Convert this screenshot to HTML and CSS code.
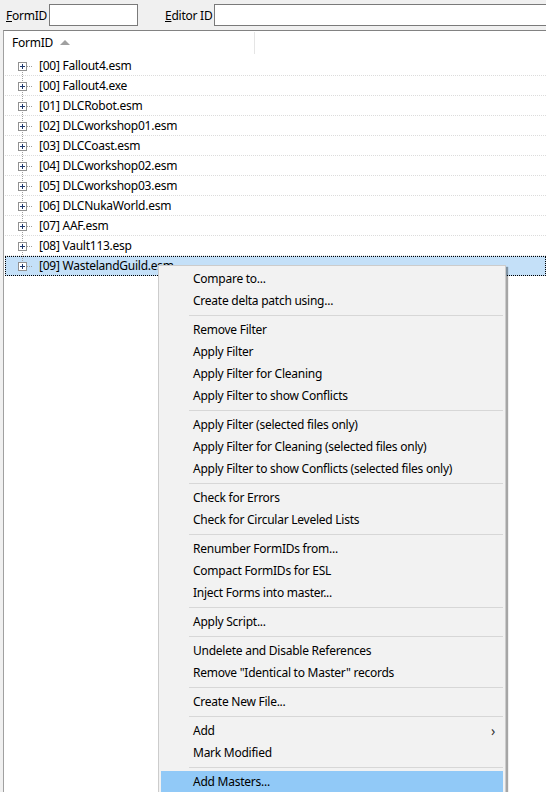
FILE: index.html
```html
<!DOCTYPE html>
<html>

<head>
    <meta charset="utf-8" />
    <title>xEdit - Files</title>
    <link rel="stylesheet" href="styles.css">
</head>

<body>
    <div class="filterbar">
        <label class="filter-label"><u>F</u>ormID</label>
        <input class="filter-input formid-input" type="text" />
        <label class="filter-label editor-label"><u>E</u>ditor ID</label>
        <input class="filter-input editor-input" type="text" />
    </div>

    <div class="tree">
        <div class="tree-header">
            <div class="col-formid">FormID <span class="sort-arrow"></span></div>
            <div class="col-rest"></div>
        </div>
        <div class="tree-body">
            <div class="row first"><span class="node"><span class="expander"></span></span>[00] Fallout4.esm</div>
            <div class="row"><span class="node"><span class="expander"></span></span>[00] Fallout4.exe</div>
            <div class="row"><span class="node"><span class="expander"></span></span>[01] DLCRobot.esm</div>
            <div class="row"><span class="node"><span class="expander"></span></span>[02] DLCworkshop01.esm</div>
            <div class="row"><span class="node"><span class="expander"></span></span>[03] DLCCoast.esm</div>
            <div class="row"><span class="node"><span class="expander"></span></span>[04] DLCworkshop02.esm</div>
            <div class="row"><span class="node"><span class="expander"></span></span>[05] DLCworkshop03.esm</div>
            <div class="row"><span class="node"><span class="expander"></span></span>[06] DLCNukaWorld.esm</div>
            <div class="row"><span class="node"><span class="expander"></span></span>[07] AAF.esm</div>
            <div class="row"><span class="node"><span class="expander"></span></span>[08] Vault113.esp</div>
            <div class="row selected last"><span class="node"><span class="expander"></span></span>[09] WastelandGuild.esm</div>
        </div>

        <div class="popup">
            <div class="item">Compare to...</div>
            <div class="item">Create delta patch using...</div>
            <div class="sep"></div>
            <div class="item">Remove Filter</div>
            <div class="item">Apply Filter</div>
            <div class="item">Apply Filter for Cleaning</div>
            <div class="item">Apply Filter to show Conflicts</div>
            <div class="sep"></div>
            <div class="item">Apply Filter (selected files only)</div>
            <div class="item">Apply Filter for Cleaning (selected files only)</div>
            <div class="item">Apply Filter to show Conflicts (selected files only)</div>
            <div class="sep"></div>
            <div class="item">Check for Errors</div>
            <div class="item">Check for Circular Leveled Lists</div>
            <div class="sep"></div>
            <div class="item">Renumber FormIDs from...</div>
            <div class="item">Compact FormIDs for ESL</div>
            <div class="item">Inject Forms into master...</div>
            <div class="sep"></div>
            <div class="item">Apply Script...</div>
            <div class="sep"></div>
            <div class="item">Undelete and Disable References</div>
            <div class="item">Remove "Identical to Master" records</div>
            <div class="sep"></div>
            <div class="item">Create New File...</div>
            <div class="sep"></div>
            <div class="item submenu">Add<span class="chevron">&#8250;</span></div>
            <div class="item">Mark Modified</div>
            <div class="sep"></div>
            <div class="item hot">Add Masters...</div>
        </div>
    </div>
</body>

</html>
```

FILE: styles.css
```css
body,
html {
    width: 100%;
    height: 100%;
    overflow: hidden;
}

body {
    margin: 0;
    background: #f0f0f0;
    font-family: "Noto Sans", "Open Sans", sans-serif;
    font-size: 12px;
    letter-spacing: -0.25px;
    color: #000;
    display: flex;
    flex-direction: column;
}

/* filter fields on top */
.filterbar {
    height: 30px;
    display: flex;
    align-items: center;
    padding-left: 6px;
    flex-shrink: 0;
}

.filter-label {
    margin-right: 2px;
}

.filter-input {
    height: 22px;
    box-sizing: border-box;
    border: 1px solid #7a7a7a;
    background: #fff;
    margin: 0;
    padding: 0;
}

.formid-input {
    width: 89px;
}

.editor-label {
    margin-left: 27px;
}

.editor-input {
    flex: 1;
    margin-right: -4px;
}

/* file tree */
.tree {
    position: relative;
    flex: 1;
    margin-left: 3px;
    background: #fff;
    border-top: 1px solid #828282;
    border-left: 1px solid #a0a0a0;
}

.tree-header {
    height: 25px;
    display: flex;
}

.col-formid {
    width: 242px;
    padding-left: 8px;
    border-right: 1px solid #e5e5e5;
    margin: 1px 0 2px 0;
    line-height: 22px;
}

.sort-arrow {
    display: inline-block;
    width: 0;
    height: 0;
    margin-left: 4px;
    vertical-align: 2px;
    border-left: 5px solid transparent;
    border-right: 5px solid transparent;
    border-bottom: 5px solid #a0a0a0;
}

.row {
    height: 20px;
    line-height: 19px;
    display: flex;
    align-items: center;
    box-sizing: border-box;
    margin-left: 1px;
    border-bottom: 1px dotted #dcdcdc;
    white-space: nowrap;
}

.node {
    position: relative;
    width: 34px;
    height: 20px;
    flex-shrink: 0;
    background:
        repeating-linear-gradient(to bottom, #a0a0a0 0 1px, transparent 1px 2px) 17px 0 / 1px 100% no-repeat;
}

.row.first .node {
    background-position: 17px 10px;
}

.row.last .node {
    background-size: 1px 10px;
}

.node::after {
    content: "";
    position: absolute;
    left: 22px;
    top: 10px;
    width: 6px;
    height: 1px;
    background: repeating-linear-gradient(to right, #a0a0a0 0 1px, transparent 1px 2px);
}

.expander {
    position: absolute;
    left: 13px;
    top: 6px;
    width: 9px;
    height: 9px;
    box-sizing: border-box;
    border: 1px solid #919191;
    background: #fff;
    z-index: 1;
}

.expander::before,
.expander::after {
    content: "";
    position: absolute;
    background: #1f3a6e;
}

.expander::before {
    left: 1px;
    top: 3px;
    width: 5px;
    height: 1px;
}

.expander::after {
    left: 3px;
    top: 1px;
    width: 1px;
    height: 5px;
}

.row.selected {
    background: #c4e0f8;
    outline: 1px dotted #000;
    outline-offset: -1px;
}

/* context menu */
.popup {
    position: absolute;
    left: 154px;
    top: 234px;
    width: 346px;
    padding: 2px 0;
    background: #f2f2f2;
    border: 1px solid #cccccc;
    box-shadow: 2px 2px 1px rgba(0, 0, 0, 0.35);
}

.item {
    position: relative;
    height: 22px;
    line-height: 22px;
    padding-left: 32px;
    margin: 0 2px;
}

.item.hot {
    background: #91c9f7;
}

.chevron {
    position: absolute;
    right: 8px;
    top: 0;
    font-size: 14px;
    color: #333;
}

.sep {
    height: 1px;
    margin: 3px 2px 3px 30px;
    background: #d7d7d7;
}
```
